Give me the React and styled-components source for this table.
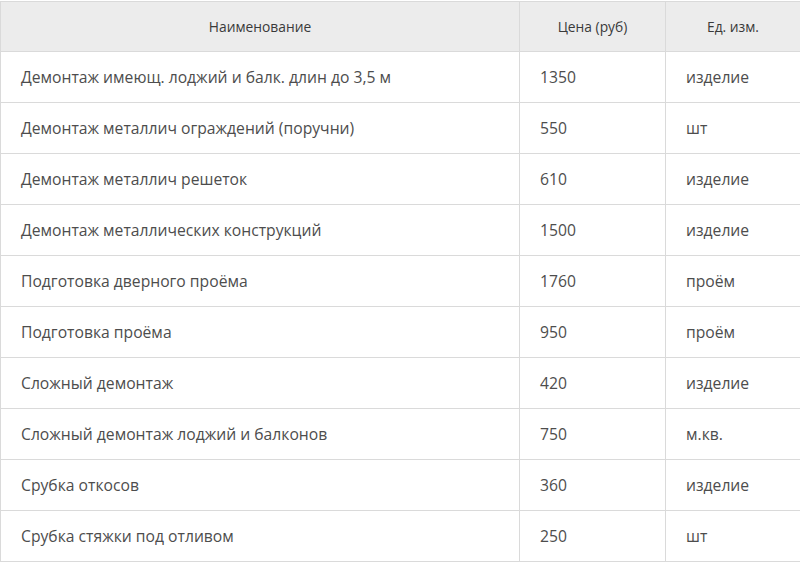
import React from 'react';
import styled, { createGlobalStyle } from 'styled-components';

const GlobalStyle = createGlobalStyle`
  body {
    margin: 0;
    background: #fff;
    font-family: "Open Sans", "Liberation Sans", sans-serif;
  }
`;

const Wrapper = styled.div`
  width: 800px;
  padding-top: 1px;
`;

const Table = styled.table`
  width: 800px;
  border-collapse: collapse;
  table-layout: fixed;
  color: #4d4d4d;
`;

const HeadCell = styled.th`
  height: 49px;
  padding: 0;
  background: #ececec;
  border: 1px solid #dadada;
  font-size: 13.8px;
  font-weight: 400;
  text-align: center;
  color: #3a3a3a;
`;

const Cell = styled.td`
  height: 50px;
  padding: 0 0 0 20px;
  border: 1px solid #dadada;
  font-size: 15.7px;
  text-align: left;
  white-space: nowrap;
`;

const items = [
  ['Демонтаж имеющ. лоджий и балк. длин до 3,5 м', '1350', 'изделие'],
  ['Демонтаж металлич ограждений (поручни)', '550', 'шт'],
  ['Демонтаж металлич решеток', '610', 'изделие'],
  ['Демонтаж металлических конструкций', '1500', 'изделие'],
  ['Подготовка дверного проёма', '1760', 'проём'],
  ['Подготовка проёма', '950', 'проём'],
  ['Сложный демонтаж', '420', 'изделие'],
  ['Сложный демонтаж лоджий и балконов', '750', 'м.кв.'],
  ['Срубка откосов', '360', 'изделие'],
  ['Срубка стяжки под отливом', '250', 'шт'],
];

const PriceTable = () => (
  <Wrapper>
    <Table>
      <colgroup>
        <col style={{ width: 519 }} />
        <col style={{ width: 146 }} />
        <col style={{ width: 135 }} />
      </colgroup>
      <thead>
        <tr>
          <HeadCell>Наименование</HeadCell>
          <HeadCell>Цена (руб)</HeadCell>
          <HeadCell>Ед. изм.</HeadCell>
        </tr>
      </thead>
      <tbody>
        {items.map((item, index) => (
          <tr key={index}>
            <Cell>{item[0]}</Cell>
            <Cell>{item[1]}</Cell>
            <Cell>{item[2]}</Cell>
          </tr>
        ))}
      </tbody>
    </Table>
  </Wrapper>
);

export default function App() {
  return (
    <>
      <GlobalStyle />
      <PriceTable />
    </>
  );
}
